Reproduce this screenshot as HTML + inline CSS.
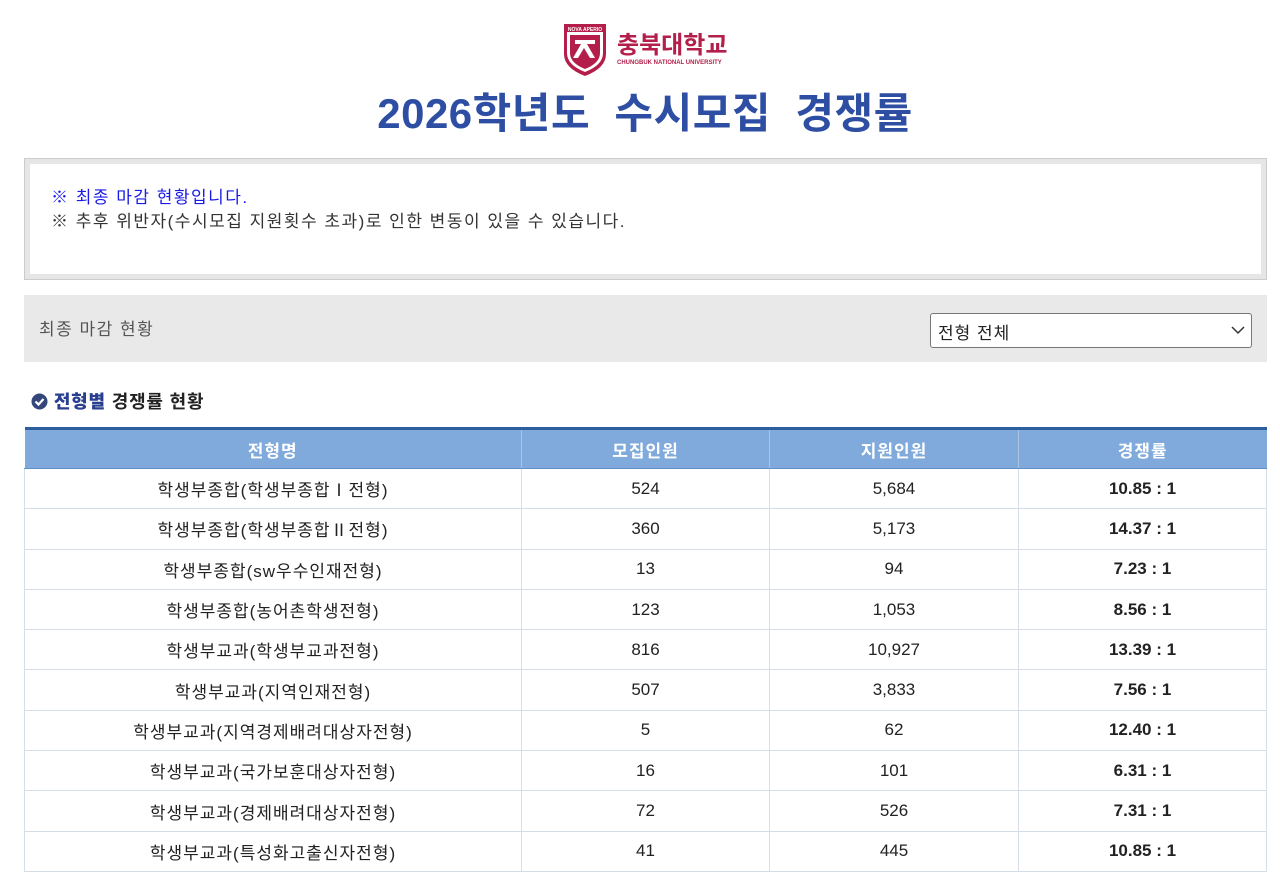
<!DOCTYPE html>
<html><head><meta charset="utf-8"><style>
*{margin:0;padding:0;box-sizing:border-box}
body{width:1280px;height:872px;overflow:hidden;background:#fff;font-family:"Liberation Sans","Noto Sans CJK KR",sans-serif;color:#222}
.logo{position:absolute;left:561px;top:20px}
.title{position:absolute;left:0;width:1290px;top:80px;text-align:center;font-size:42px;font-weight:bold;color:#2e4ea3;letter-spacing:0.5px}
.notice{position:absolute;left:24px;top:158px;width:1243px;height:122px;border:1px solid #ccc;background:#e6e6e6;padding:5px}
.notice .in{background:#fff;width:100%;height:100%;padding:22px 21px;font-size:17px;line-height:24px;color:#333;letter-spacing:1.5px}
.bar{position:absolute;left:24px;top:295px;width:1243px;height:67px;background:#e9e9e9}
.bar span{position:absolute;left:15px;top:20px;font-size:17px;color:#555;letter-spacing:1.5px}
.sel{position:absolute;left:906px;top:18px;width:322px;height:35px;background:#fff;border:1px solid #777;border-radius:3px;font-size:17px;padding:5px 7px;color:#222;letter-spacing:1px}
.sel svg{position:absolute;right:6px;top:12px}
.h2{position:absolute;left:31px;top:388px;font-size:18px;font-weight:bold;color:#222;letter-spacing:0.8px}
.h2 b{color:#2a3f8f}
table{position:absolute;left:24px;top:427px;width:1243px;border-collapse:collapse;border-top:3px solid #2d5f9e}
th{background:#7faadb;color:#fff;height:40px;font-size:17px;border-left:1px solid #a9c4e6;border-bottom:1px solid #5f8fc8;letter-spacing:1px}
td{height:40.3px;text-align:center;font-size:17px;border:1px solid #d5dde9;color:#222}
td:first-child{letter-spacing:1px}
th:first-child{border-left:none}
</style></head><body>
<div class="logo">
<svg width="170" height="58" viewBox="0 0 170 58">
<path d="M3 4 L45 4 L45 34 Q45 48 24 56 Q3 48 3 34 Z" fill="#b31e4a"/>
<path d="M6 12 L42 12 L42 33 Q42 45 24 52 Q6 45 6 33 Z" fill="#fff"/>
<path d="M9 15 L39 15 L39 33 Q39 43 24 49 Q9 43 9 33 Z" fill="#b31e4a"/>
<path d="M14 20 h20 v4 h-8 l8 14 h-5 l-6 -10 l-6 10 h-5 l8-14 h-6z" fill="#fff"/>
<text x="24" y="11" font-size="5" fill="#fff" text-anchor="middle" font-weight="bold">NOVA APERIO</text>
<text x="56" y="33" font-size="24" font-weight="bold" fill="#b31e4a" font-family="Noto Sans CJK KR">충북대학교</text>
<text x="56" y="44" font-size="6" fill="#b31e4a" font-weight="bold">CHUNGBUK NATIONAL UNIVERSITY</text>
</svg></div>
<div class="title">2026학년도 &nbsp;수시모집 &nbsp;경쟁률</div>
<div class="notice"><div class="in"><div style="color:#1a1ae6">※ 최종 마감 현황입니다.</div><div>※ 추후 위반자(수시모집 지원횟수 초과)로 인한 변동이 있을 수 있습니다.</div></div></div>
<div class="bar"><span>최종 마감 현황</span><div class="sel">전형 전체<svg width="14" height="9" viewBox="0 0 14 9"><path d="M1 1 L7 7 L13 1" stroke="#333" stroke-width="1.5" fill="none"/></svg></div></div>
<div class="h2"><svg width="17" height="17" viewBox="0 0 17 17" style="vertical-align:-2px"><circle cx="8.5" cy="8.5" r="8" fill="#35467a"/><path d="M4.5 8.5 L7.5 11.5 L12.5 6" stroke="#fff" stroke-width="2.2" fill="none"/></svg> <b>전형별</b> 경쟁률 현황</div>
<table>
<tr><th style="width:497px">전형명</th><th style="width:248px">모집인원</th><th style="width:249px">지원인원</th><th>경쟁률</th></tr>
<tr><td>학생부종합(학생부종합Ⅰ전형)</td><td>524</td><td>5,684</td><td><b>10.85 : 1</b></td></tr>
<tr><td>학생부종합(학생부종합Ⅱ전형)</td><td>360</td><td>5,173</td><td><b>14.37 : 1</b></td></tr>
<tr><td>학생부종합(sw우수인재전형)</td><td>13</td><td>94</td><td><b>7.23 : 1</b></td></tr>
<tr><td>학생부종합(농어촌학생전형)</td><td>123</td><td>1,053</td><td><b>8.56 : 1</b></td></tr>
<tr><td>학생부교과(학생부교과전형)</td><td>816</td><td>10,927</td><td><b>13.39 : 1</b></td></tr>
<tr><td>학생부교과(지역인재전형)</td><td>507</td><td>3,833</td><td><b>7.56 : 1</b></td></tr>
<tr><td>학생부교과(지역경제배려대상자전형)</td><td>5</td><td>62</td><td><b>12.40 : 1</b></td></tr>
<tr><td>학생부교과(국가보훈대상자전형)</td><td>16</td><td>101</td><td><b>6.31 : 1</b></td></tr>
<tr><td>학생부교과(경제배려대상자전형)</td><td>72</td><td>526</td><td><b>7.31 : 1</b></td></tr>
<tr><td>학생부교과(특성화고출신자전형)</td><td>41</td><td>445</td><td><b>10.85 : 1</b></td></tr>
</table>
</body></html>
